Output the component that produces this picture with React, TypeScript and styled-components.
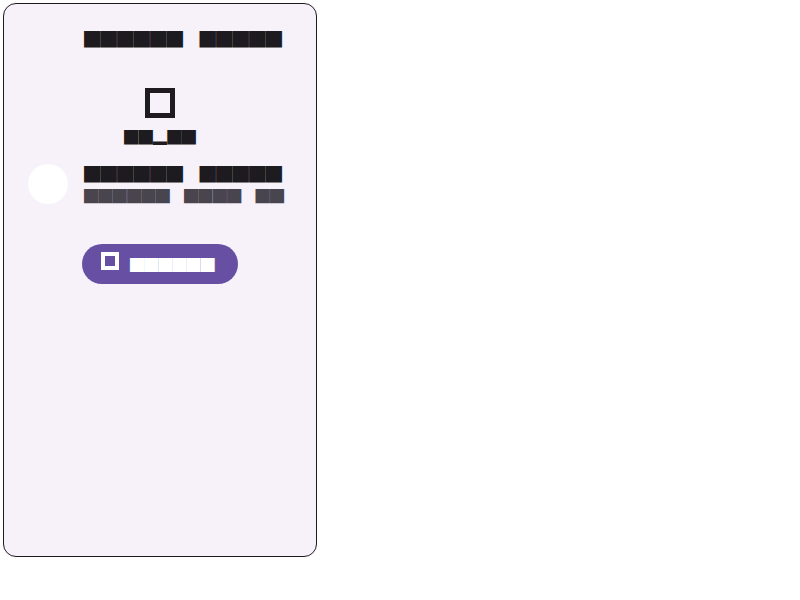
import React from 'react';
import styled, { createGlobalStyle } from 'styled-components';

const GlobalStyle = createGlobalStyle`
  html, body {
    margin: 0;
    padding: 0;
    background: #ffffff;
  }
  body {
    font-family: "Noto Sans CJK SC", "DejaVu Sans", sans-serif;
  }
`;

const Card = styled.div`
  margin: 3px;
  width: 312px;
  height: 552px;
  border: 1px solid #1d1b20;
  border-radius: 13px;
  background: #f7f2fa;
  display: flex;
  flex-direction: column;
`;

const Header = styled.div`
  display: flex;
  padding: 25px 16px 0 80px;
`;

const Text = styled.span<{ $size: number; $color?: string }>`
  display: block;
  font-size: ${(p) => p.$size}px;
  line-height: 20px;
  color: ${(p) => p.$color || '#1d1b20'};
  white-space: pre;
`;

const Center = styled.div`
  display: flex;
  flex-direction: column;
  align-items: center;
  margin-top: 39px;
  gap: 9px;
`;

const IconBox = styled.span<{ $size: number; $stroke: number; $color: string }>`
  display: block;
  width: ${(p) => p.$size}px;
  height: ${(p) => p.$size}px;
  border: ${(p) => p.$stroke}px solid ${(p) => p.$color};
  box-sizing: border-box;
  flex-shrink: 0;
`;

const ListItem = styled.div`
  display: flex;
  align-items: flex-start;
  gap: 16px;
  padding: 0 24px;
  margin-top: 17px;
  height: 40px;
`;

const Avatar = styled.div`
  width: 40px;
  height: 40px;
  border-radius: 50%;
  background: #ffffff;
  flex-shrink: 0;
`;

const ItemText = styled.div`
  display: flex;
  flex-direction: column;
  gap: 2px;
`;

const Actions = styled.div`
  display: flex;
  justify-content: center;
  margin-top: 40px;
`;

const FilledButton = styled.button`
  display: flex;
  align-items: center;
  gap: 11px;
  height: 40px;
  width: 156px;
  padding: 0 0 0 19px;
  border: none;
  border-radius: 20px;
  background: #6750a4;
  font-family: inherit;
  cursor: pointer;

  & > ${IconBox} {
    margin-bottom: 6px;
  }
`;

export default function App() {
  return (
    <>
      <GlobalStyle />
      <Card>
        <Header>
          <Text $size={16.5}>██████　█████</Text>
        </Header>
        <Center>
          <IconBox $size={30} $stroke={5} $color="#1d1b20" />
          <Text $size={14.4}>██▂██</Text>
        </Center>
        <ListItem>
          <Avatar />
          <ItemText>
            <Text $size={16.5}>██████　█████</Text>
            <Text $size={14.3} $color="#49454f">██████　████　██</Text>
          </ItemText>
        </ListItem>
        <Actions>
          <FilledButton>
            <IconBox $size={18} $stroke={4} $color="#ffffff" />
            <Text $size={14.1} $color="#ffffff">██████</Text>
          </FilledButton>
        </Actions>
      </Card>
    </>
  );
}
